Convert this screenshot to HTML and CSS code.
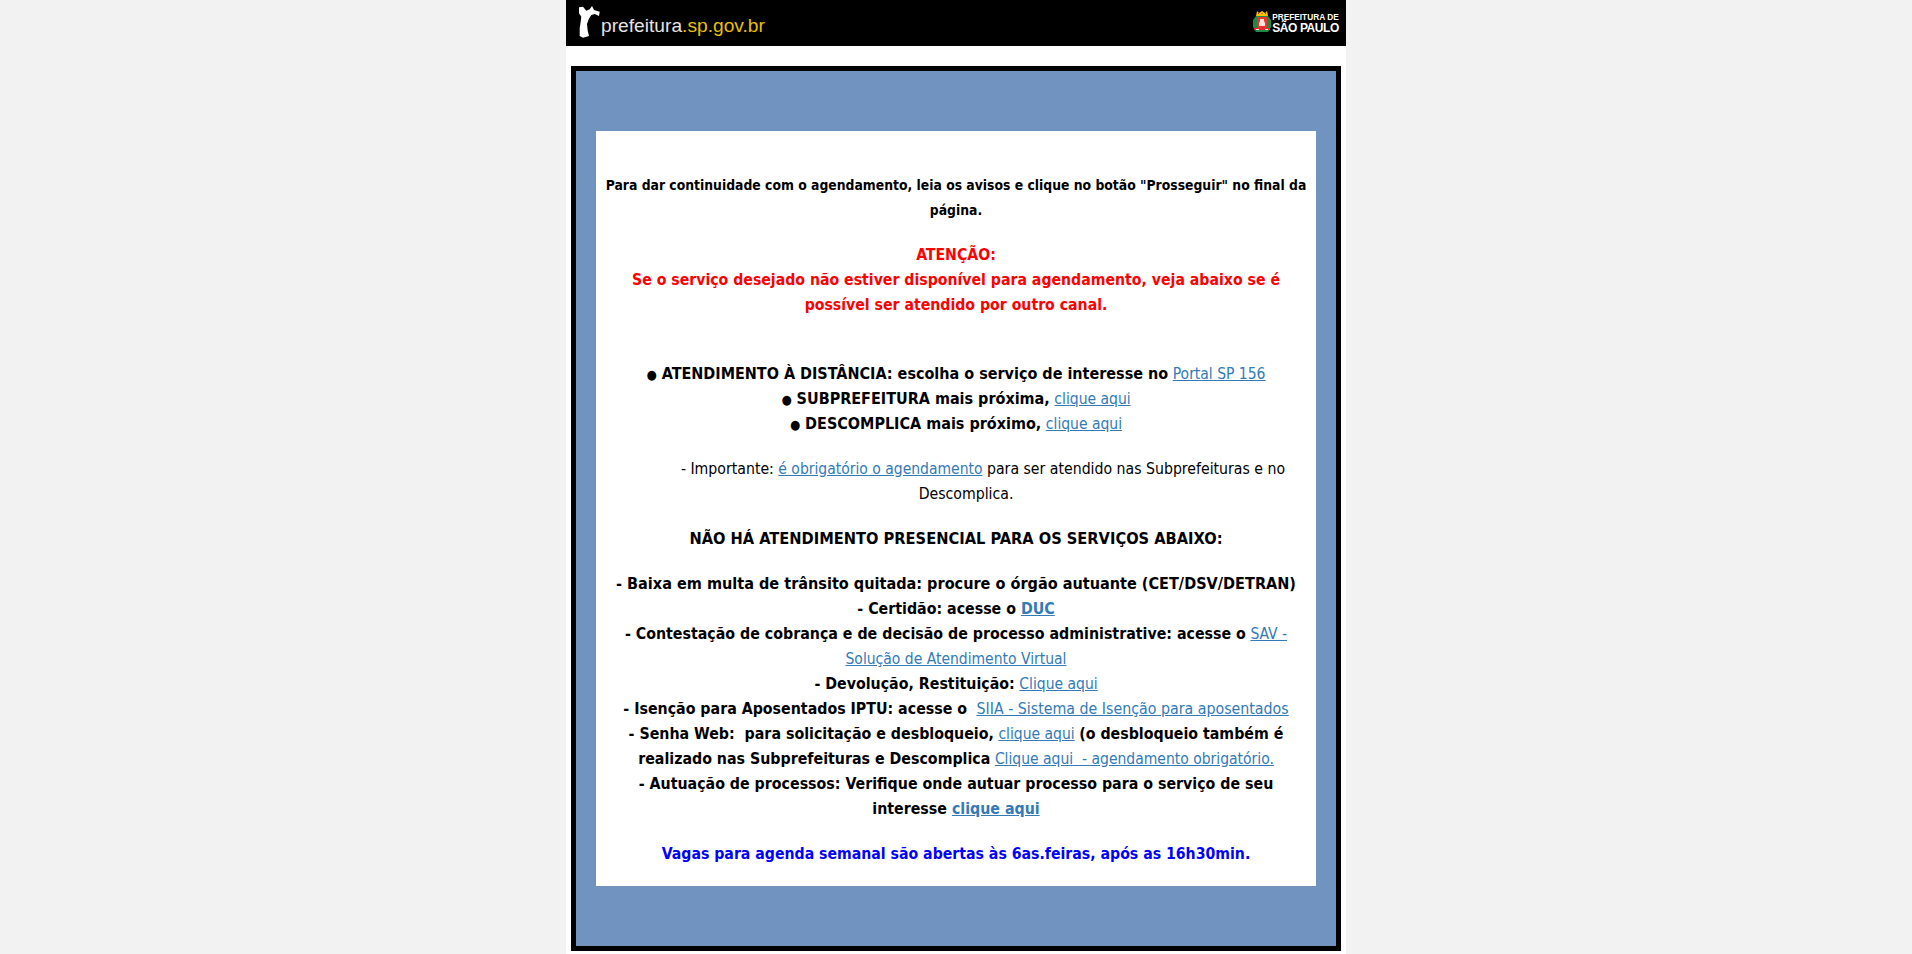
FILE: index.html
```html
<!DOCTYPE html>
<html lang="pt-BR">
<head>
<meta charset="utf-8">
<title>Prefeitura de São Paulo</title>
<link rel="stylesheet" href="styles.css">
</head>
<body>
<div class="page">
  <header class="topbar">
    <div class="brand">
      <svg class="map" viewBox="0 0 21 33" width="21" height="33"><path fill="#fff" d="M0 1.3 4 .7 7.3 4.7 10.7 3.3 13 0 15 4 20.7 5.7 20 10 15.7 8 12.3 9 9.7 13.3 8 18 8.7 24.7 10 30 4 31.7 .7 30 .7 22.3 1.7 15.7 2.3 10.7 0 7.3Z"/></svg>
      <span class="brand-name">prefeitura<span class="brand-domain">.sp.gov.br</span></span>
    </div>
    <div class="city">
      <svg class="crest" viewBox="0 0 18 22" width="18" height="22"><path fill="#f2c200" d="M4 0 6 2 9 0l3 2 2-2 1 5H3z"/><path fill="#c8202a" d="M5 2h1v1H5zM8.500 2h1v1h-1zM12 2h1v1h-1z"/><path fill="#1f8a45" d="M3 5h12l3 4v7l-3 5H3l-3-5V9z"/><path fill="#e8342b" d="M4 6h10v10l-2 2H6l-2-2z"/><path fill="#fbe3e0" d="M7 8h4v2l1 2v3H6v-3l1-2z"/><path fill="#f02a2a" d="M1 17h16v2H1z"/><path fill="#fff" d="M3 18h3v1H3zM12 18h3v1h-3z"/></svg>
      <div class="city-text"><span class="city-small">PREFEITURA DE</span><span class="city-big">SÃO PAULO</span></div>
    </div>
  </header>
  <main class="frame">
    <section class="notice">
      <p class="intro">Para dar continuidade com o agendamento, leia os avisos e clique no botão "Prosseguir" no final da página.</p>
      <p class="alert">ATENÇÃO:<br>Se o serviço desejado não estiver disponível para agendamento, veja abaixo se é possível ser atendido por outro canal.</p>
      <p class="channels"><b><span class="dot">●</span> ATENDIMENTO À DISTÂNCIA: escolha o serviço de interesse no</b> <a href="#">Portal SP 156</a><br><b><span class="dot">●</span> SUBPREFEITURA mais próxima,</b> <a href="#">clique aqui</a><br><b><span class="dot">●</span> DESCOMPLICA mais próximo,</b> <a href="#">clique aqui</a></p>
      <p class="important">- Importante: <a href="#">é obrigatório o agendamento</a> para ser atendido nas Subprefeituras e no Descomplica.</p>
      <p class="heading">NÃO HÁ ATENDIMENTO PRESENCIAL PARA OS SERVIÇOS ABAIXO:</p>
      <p class="services"><b class="caps">- Baixa em multa de trânsito quitada: procure o órgão autuante (CET/DSV/DETRAN)</b><br>
      <b>- Certidão: acesse o <a href="#">DUC</a></b><br>
      <b>- Contestação de cobrança e de decisão de processo administrative: acesse o</b> <a href="#">SAV - Solução de Atendimento Virtual</a><br>
      <b>- Devolução, Restituição:</b> <a href="#">Clique aqui</a><br>
      <b>- Isenção para Aposentados IPTU: acesse o&nbsp;</b> <a class="wide-link" href="#">SIIA - Sistema de Isenção para aposentados</a><br>
      <b>- Senha Web:&nbsp; para solicitação e desbloqueio,</b> <a href="#">clique aqui</a> <b>(o desbloqueio também é realizado nas Subprefeituras e Descomplica</b> <a href="#">Clique aqui&nbsp; - agendamento obrigatório.</a><br>
      <b>- Autuação de processos: Verifique onde autuar processo para o serviço de seu interesse <a href="#">clique aqui</a></b></p>
      <p class="slots">Vagas para agenda semanal são abertas às 6as.feiras, após as 16h30min.</p>
    </section>
  </main>
</div>
</body>
</html>
```

FILE: styles.css
```css
* { box-sizing: border-box; }
html, body { margin: 0; padding: 0; }
body { background: #f2f2f2; font-family: "DejaVu Sans Condensed", "DejaVu Sans", sans-serif; font-stretch: condensed; color: #000; height: 954px; overflow: hidden; }
.page { width: 780px; margin: 0 0 0 566px; background: #fff; padding-bottom: 3px; }
.topbar { height: 46px; background: #000; display: flex; justify-content: space-between; align-items: flex-start; padding: 6px 7px 0 13px; }
.brand { display: flex; align-items: flex-start; gap: 1px; }
.brand-name { font-family: "Liberation Sans", sans-serif; font-stretch: normal; font-size: 19.2px; color: #e4e4e4; line-height: 24px; margin-top: 8px; }
.brand-domain { color: #e8c000; }
.city { display: flex; align-items: flex-start; gap: 1px; margin-top: 5px; }
.city-text { display: flex; flex-direction: column; color: #fff; font-family: "Liberation Sans", sans-serif; font-stretch: normal; font-weight: bold; padding-top: 2px; }
.city-small { font-size: 8.3px; line-height: 9px; }
.city-big { font-size: 12px; line-height: 12px; letter-spacing: -0.4px; }
.frame { margin: 20px 5px 0; border: 5px solid #000; background: #7094bf; padding: 60px 20px; }
.notice { background: #fff; text-align: center; padding: 42px 8px 20px; line-height: 25px; font-size: 16px; }
.notice p { margin: 0 0 20px; }
.notice p > a { color: #337ab7; text-decoration: underline; font-size: 15.5px; line-height: 1; }
.notice b a { color: #337ab7; text-decoration: underline; line-height: 1; }
.notice .wide-link { font-size: 15.8px; }
.dot { font-size: 13px; line-height: 1; }
.notice .intro { font-size: 13.8px; font-weight: bold; margin-bottom: 19px; }
.alert { color: #f00; font-weight: bold; font-size: 15.7px; padding-bottom: 24px; }
.heading { font-weight: bold; font-size: 16.3px; }
.important { padding-left: 20px; text-indent: 34px; font-size: 15.7px; }
.services { font-size: 15.8px; }
.caps { font-size: 16.1px; line-height: 1; }
.slots { color: #00f; font-weight: bold; font-size: 15.7px; }
.notice .slots { margin-bottom: 0; }
```
